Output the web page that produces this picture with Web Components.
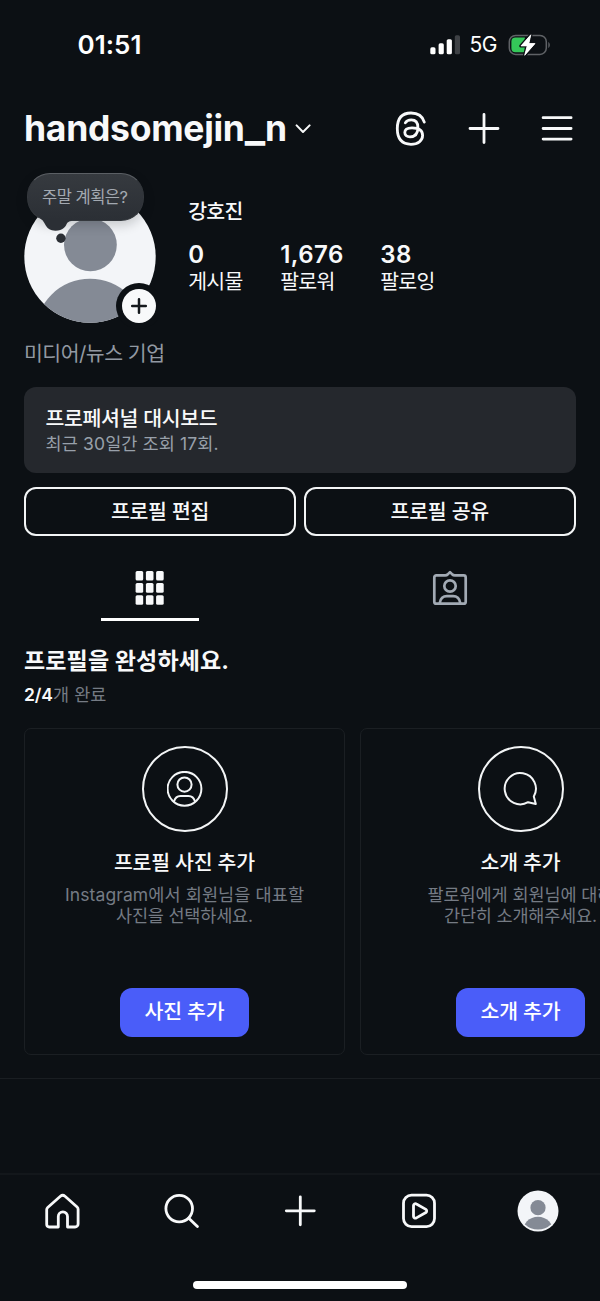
<!DOCTYPE html>
<html lang="ko">
<head>
<meta charset="utf-8">
<title>handsomejin_n</title>
<style>
  html, body { margin: 0; background: #0c1014; }
  body {
    width: 600px; height: 1301px; overflow: hidden;
    font-family: Inter, "Noto Sans CJK KR", sans-serif;
    color: #f8f9fa;
    -webkit-font-smoothing: antialiased;
  }
</style>
</head>
<body>
<profile-app></profile-app>

<script>
const define = (name, html, setup) => {
  const tpl = document.createElement('template');
  tpl.innerHTML = html;
  customElements.define(name, class extends HTMLElement {
    constructor() {
      super();
      this.attachShadow({ mode: 'open' }).appendChild(tpl.content.cloneNode(true));
    }
    connectedCallback() { if (setup) setup(this, this.shadowRoot); }
  });
};

/* One line of text; size, line height, weight and tracked width come from attributes. */
define('text-line', `
<style>
  :host { display: block; white-space: nowrap; }
  span { display: inline-block; vertical-align: top; }
</style><span><slot></slot></span>`, (host, root) => {
  const span = root.querySelector('span');
  host.style.fontSize = host.getAttribute('size') + 'px';
  host.style.lineHeight = host.getAttribute('lh') + 'px';
  host.style.height = host.getAttribute('lh') + 'px';
  if (host.hasAttribute('weight')) host.style.fontWeight = host.getAttribute('weight');
  const w = parseFloat(host.getAttribute('w'));
  if (w) {
    const n = root.querySelector('slot').assignedNodes({ flatten: true })
      .reduce((sum, node) => sum + node.textContent.length, 0);
    const gap = (w - span.getBoundingClientRect().width) / (n - 1);
    span.style.letterSpacing = gap + 'px';
    span.style.marginRight = -gap + 'px';
  }
});

define('status-bar', `
<style>
  :host { display: flex; height: 90px; align-items: center; justify-content: space-between; padding: 0 49px 0 77.5px; color: #fff; }
  .right { display: flex; align-items: center; }
  svg { display: block; }
  .net { margin: 0 10.500px 0 9.500px; }
</style>
<text-line size="26" lh="30" weight="600" w="64">01:51</text-line>
<div class="right">
  <svg width="30" height="20" viewBox="0 0 30 20" fill="#fff">
    <rect x=".3" y="12.3" width="5.2" height="7" rx="1.6"/>
    <rect x="8.6" y="8.3" width="5.2" height="11" rx="1.6"/>
    <rect x="16.7" y="4.2" width="5.2" height="15.1" rx="1.6"/>
    <rect x="24.8" y=".2" width="5.2" height="19.1" rx="1.6" fill="#3e4145"/>
  </svg>
  <text-line class="net" size="21" lh="24" weight="400" w="28">5G</text-line>
  <svg width="43" height="22" viewBox="0 0 43 22">
    <rect x="1.3" y="1.4" width="37" height="19" rx="6.3" fill="none" stroke="#5f6266" stroke-width="1.5"/>
    <path d="M40.3 8v6c2-1 2-5 0-6z" fill="#5f6266"/>
    <path d="M7.4 3.6h9.4v14.6H7.4a4 4 0 0 1-4-4V7.6a4 4 0 0 1 4-4z" fill="#34c759"/>
    <path d="M22.8.8 13 11.9h6.2L16.7 21.3 27 9.6h-6.2z" fill="#fff" stroke="#0c1014" stroke-width="3.4" stroke-linejoin="round" paint-order="stroke"/>
    <path d="M22.8.8 13 11.9h6.2L16.7 21.3 27 9.6h-6.2z" fill="#fff" stroke="#fff" stroke-width=".8" stroke-linejoin="round"/>
  </svg>
</div>`);

define('profile-header', `
<style>
  :host { display: flex; height: 78px; align-items: center; padding: 0 26px 0 24px; }
  svg { display: block; fill: none; stroke: #f8f9fa; stroke-width: 2.8; stroke-linecap: round; stroke-linejoin: round; }
  .chev { margin-left: 8px; stroke-width: 2; }
  .bar { font-size: 43px; line-height: 0; }
  .icons { display: flex; align-items: center; gap: 40px; margin-left: auto; }
</style>
<text-line size="35.5" lh="44" weight="700" w="263">handsomejin<span class="bar">_</span>n</text-line>
<svg class="chev" width="16" height="10" viewBox="0 0 16 10"><path d="M1.6 1.4 8 8l6.6-6.6"/></svg>
<div class="icons">
  <svg width="32" height="36" viewBox="395 110.4 32 36"><path d="M424.3 121.5C422.5 115.5 418 112.4 411 112.4C402 112.4 397.3 118 397.3 128S402 143.7 411 143.7C418 143.7 422.6 140 422.6 135C422.6 129.5 418 127.3 412 127.3C407.5 127.3 404.8 129 404.8 132C404.8 134.6 407 136.3 410 136.3C415.5 136.3 417.9 132.5 417.9 127C417.9 122 415.5 119.3 411.3 119.3C408.5 119.3 406.5 120.3 405.3 122.3"/></svg>
  <svg width="34" height="34" viewBox="0 .5 34 34"><path d="M17 3v28M3 17h28"/></svg>
  <svg width="33" height="34" viewBox=".7 .5 33 34"><path d="M2.8 6.2h28M2.8 17h28M2.8 27.6h28"/></svg>
</div>`);

define('note-bubble', `
<style>
  :host { display: block; width: 117px; height: 70px; }
  .body {
    box-sizing: border-box; position: relative; display: flex; align-items: center; justify-content: center;
    width: 117px; height: 48.6px; border-radius: 23px; color: #a3a9b1;
    background: linear-gradient(#363a3f, #2b2f35); border: 1px solid #34383d; border-top-color: #5b5f64;
    box-shadow: 0 4px 12px rgba(12,16,20,.2);
  }
  svg { position: absolute; left: 0; top: 0; }
</style>
<div class="body"><text-line size="16.500" lh="22" w="86"><slot></slot></text-line></div>
<svg width="117" height="70" viewBox="0 0 117 70">
  <path d="M14 46C18.5 48.5 18 57.700 28.500 57.700C36 57.700 38.500 53.500 39.500 51.300C40.500 49.200 42 48.500 44.500 48.100V45H14z" fill="#2b2f35"/>
  <circle cx="33.900" cy="65.200" r="4.700" fill="#2b2f35"/>
</svg>`);

define('profile-photo', `
<style>
  :host { display: block; position: relative; width: 135px; height: 164px; }
  svg { display: block; }
  note-bubble { position: absolute; left: 2.500px; top: 4.500px; }
</style>
<svg width="135" height="164" viewBox="24 168 135 164">
  <defs><clipPath id="c"><circle cx="90" cy="257" r="65.700"/></clipPath></defs>
  <circle cx="90" cy="257" r="65.700" fill="#f3f5f8"/>
  <g clip-path="url(#c)" fill="#848a95">
    <circle cx="90.400" cy="244.800" r="26.400"/>
    <circle cx="90" cy="333.200" r="54.500"/>
  </g>
  <circle cx="139" cy="306" r="23" fill="#0c1014"/>
  <circle cx="139" cy="306" r="17" fill="#f8f9fa"/>
  <path d="M139 299.200v13.600M132.200 306h13.600" stroke="#15191d" stroke-width="2.500" stroke-linecap="round"/>
</svg>
<note-bubble><slot></slot></note-bubble>`);

define('stat-item', `
<style>:host { display: block; }</style>
<slot name="n"></slot><slot></slot>`);

define('profile-summary', `
<style>
  :host { display: flex; height: 219px; flex-wrap: wrap; padding: 0 24px; box-sizing: border-box; align-content: flex-start; }
  .info { padding: 31px 0 0 29.300px; }
  .stats { display: flex; gap: 37px; padding-top: 16px; }
  .cat { flex-basis: 100%; padding-top: 8.500px; color: #9299a2; }
</style>
<profile-photo>주말 계획은?</profile-photo>
<div class="info">
  <text-line size="20.500" lh="26" w="55" weight="500">강호진</text-line>
  <div class="stats">
    <stat-item><text-line slot="n" size="24" lh="27" weight="600">0</text-line><text-line size="20.500" lh="27" w="55">게시물</text-line></stat-item>
    <stat-item><text-line slot="n" size="24" lh="27" weight="600" w="63">1,676</text-line><text-line size="20.500" lh="27" w="55">팔로워</text-line></stat-item>
    <stat-item><text-line slot="n" size="24" lh="27" weight="600" w="31">38</text-line><text-line size="20.500" lh="27" w="55">팔로잉</text-line></stat-item>
  </div>
</div>
<text-line class="cat" size="20.500" lh="26" w="141">미디어/뉴스 기업</text-line>`);

define('dashboard-card', `
<style>
  :host { display: block; box-sizing: border-box; height: 86px; margin: 0 24.300px; padding: 19px 0 0 21.300px; border-radius: 12px; background: #25282d; }
  .sub { color: #98a0aa; margin-top: -.5px; }
</style>
<text-line size="20.500" lh="26" w="172" weight="500">프로페셔널 대시보드</text-line>
<text-line class="sub" size="17.500" lh="23" w="173">최근 30일간 조회 17회.</text-line>`);

define('outline-button', `
<style>:host { display: flex; flex: 1; height: 49px; box-sizing: border-box; align-items: center; justify-content: center; padding-top: 1px; border: 2px solid #f3f5f6; border-radius: 12px; }</style>
<text-line size="20.500" lh="26" w="98.500" weight="500"><slot></slot></text-line>`);

define('profile-actions', `
<style>:host { display: flex; gap: 8px; padding: 13.500px 24.300px 0; height: 63px; box-sizing: border-box; }</style>
<outline-button>프로필 편집</outline-button><outline-button>프로필 공유</outline-button>`);

define('profile-tabs', `
<style>
  :host { display: grid; grid-template-columns: 1fr 1fr; height: 85px; }
  div { display: flex; flex-direction: column; align-items: center; padding-top: 34px; }
  i { width: 98px; height: 3px; background: #fff; margin-top: 12px; }
  svg { display: block; }
</style>
<div>
  <svg width="30" height="36" viewBox="0 0 30 36" fill="#f8f9fa">
    <g id="r"><rect x=".6" y="1" width="7.600" height="9.600" rx="1.500"/><rect x="10.900" y="1" width="7.600" height="9.600" rx="1.500"/><rect x="21.100" y="1" width="7.600" height="9.600" rx="1.500"/></g>
    <use href="#r" y="12.100"/><use href="#r" y="24.200"/>
  </svg><i></i>
</div>
<div>
  <svg width="36" height="36" viewBox="0 0 36 36" fill="none" stroke="#a2aab4" stroke-width="2.700" stroke-linejoin="round" stroke-linecap="round">
    <path d="M4.300 5.400h8.900c1.600 0 2-.500 2.800-1.300L18 2.100l2 2c.800.800 1.200 1.300 2.800 1.300h8.900a2 2 0 0 1 2 2v24.300a2 2 0 0 1-2 2H4.300a2 2 0 0 1-2-2V7.400a2 2 0 0 1 2-2z"/>
    <circle cx="18" cy="16" r="5.700"/>
    <path d="M7.800 33c.500-4.500 3.500-6.900 7-6.900h6.400c3.500 0 6.500 2.400 7 6.900"/>
  </svg>
</div>`);

define('setup-card', `
<style>
  :host { display: flex; flex: none; flex-direction: column; align-items: center; box-sizing: border-box; width: 321px; height: 327px; padding-top: 17px; border: 1px solid #1b1f23; border-radius: 7px; }
  .ring { display: flex; align-items: center; justify-content: center; box-sizing: border-box; width: 86px; height: 86px; border: 2px solid #f3f5f6; border-radius: 50%; }
  .title { margin-top: 18px; }
  .desc { display: flex; flex-direction: column; align-items: center; margin-top: 7.500px; color: #757b84; }
  .btn { display: flex; align-items: center; justify-content: center; width: 129px; height: 49px; margin-top: 62px; border-radius: 12px; background: #4a5df9; color: #fff; }
</style>
<div class="ring"><slot name="icon"></slot></div>
<div class="title"><slot name="title"></slot></div>
<div class="desc"><slot name="desc"></slot></div>
<div class="btn"><slot name="btn"></slot></div>`);

define('setup-section', `
<style>
  :host { display: block; height: 458px; box-sizing: border-box; padding: 25px 0 0 24px; border-bottom: 1px solid #1a1e22; overflow: hidden; }
  .count { display: flex; margin-top: 6.500px; color: #757b84; }
  b { display: contents; color: #f8f9fa; }
  .row { display: flex; gap: 15px; margin-top: 22.500px; }
  svg { display: block; fill: none; stroke: #f3f5f6; stroke-width: 2; stroke-linejoin: round; stroke-linecap: round; }
</style>
<text-line size="23" lh="30" w="205" weight="700">프로필을 완성하세요.</text-line>
<div class="count"><b><text-line size="17.500" lh="23" w="29" weight="600">2/4</text-line></b><text-line size="17.500" lh="23" w="53.500">개 완료</text-line></div>
<div class="row">
  <setup-card>
    <svg slot="icon" width="36" height="36" viewBox=".3 .2 36 36"><circle cx="17.800" cy="18" r="16.900"/><circle cx="17.800" cy="13.800" r="7.100"/><path d="M7.300 30.700c1-3.500 3.500-5.500 6.500-5.500h8c3 0 5.500 2 6.500 5.500"/></svg>
    <text-line slot="title" size="20.500" lh="26" w="141" weight="500">프로필 사진 추가</text-line>
    <text-line slot="desc" size="17.500" lh="21.200" w="239">Instagram에서 회원님을 대표할</text-line>
    <text-line slot="desc" size="17.500" lh="21.200" w="137">사진을 선택하세요.</text-line>
    <text-line slot="btn" size="20.500" lh="26" w="80" weight="500">사진 추가</text-line>
  </setup-card>
  <setup-card>
    <svg slot="icon" width="36" height="36" viewBox=".7 .7 36 36"><path d="M31.500 26.200A15.600 15.600 0 1 0 25.800 31.900L33.500 33.700z"/></svg>
    <text-line slot="title" size="20.500" lh="26" w="80" weight="500">소개 추가</text-line>
    <text-line slot="desc" size="17.500" lh="21.200" w="186">팔로워에게 회원님에 대해</text-line>
    <text-line slot="desc" size="17.500" lh="21.200" w="153">간단히 소개해주세요.</text-line>
    <text-line slot="btn" size="20.500" lh="26" w="80" weight="500">소개 추가</text-line>
  </setup-card>
</div>`);

define('tab-bar', `
<style>
  :host { display: flex; flex-direction: column; align-items: center; box-sizing: border-box; height: 128px; margin-top: auto; border-top: 2px solid #13171b; }
  nav { display: grid; grid-template-columns: repeat(5, 119.200px); width: 596px; height: 72px; align-items: center; justify-items: center; }
  svg { display: block; fill: none; stroke: #f8f9fa; stroke-width: 2.800; stroke-linejoin: round; stroke-linecap: round; }
  i { width: 214px; height: 8px; margin-top: 34px; border-radius: 4px; background: #fff; }
</style>
<nav>
  <svg width="36" height="36" viewBox="0 0 36 36"><path d="M4.900 34H14.300V23.500a4.600 4.600 0 0 1 9.200 0V34h7.600a3 3 0 0 0 3-3V16.200a3 3 0 0 0-1-2.200L21 3.200a3.500 3.500 0 0 0-4.600 0L3.700 14.500a3 3 0 0 0-1 2.200V31a3 3 0 0 0 2.200 3z"/></svg>
  <svg width="36" height="36" viewBox="0 0 36 36"><circle cx="16.200" cy="15.600" r="13.300"/><path d="m25.800 25.200 8.600 8.400"/></svg>
  <svg width="36" height="36" viewBox="0 0 36 36"><path d="M18.300 3.800v28M4.300 17.800h28"/></svg>
  <svg width="36" height="36" viewBox="0 0 36 36"><rect x="2.500" y="2.200" width="31" height="31.400" rx="8"/><path d="M12.500 12.600a1.900 1.900 0 0 1 2.900-1.600l9.500 5.400a1.900 1.900 0 0 1 0 3.100l-9.500 5.400a1.900 1.900 0 0 1-2.900-1.600z"/></svg>
  <svg width="42" height="42" viewBox="0 0 42 42" stroke="none" style="stroke:none">
    <defs><clipPath id="m"><circle cx="21" cy="21" r="18.600"/></clipPath></defs>
    <circle cx="21" cy="21" r="20.500" fill="#f3f5f8"/>
    <g clip-path="url(#m)" fill="#848a95"><circle cx="21" cy="17.700" r="7.600"/><circle cx="21" cy="42.400" r="15.600"/></g>
  </svg>
</nav>
<i></i>`);

define('profile-app', `
<style>:host { display: flex; flex-direction: column; width: 600px; height: 1301px; }</style>
<status-bar></status-bar>
<profile-header></profile-header>
<profile-summary></profile-summary>
<dashboard-card></dashboard-card>
<profile-actions></profile-actions>
<profile-tabs></profile-tabs>
<setup-section></setup-section>
<tab-bar></tab-bar>`);
</script>
</body>
</html>
